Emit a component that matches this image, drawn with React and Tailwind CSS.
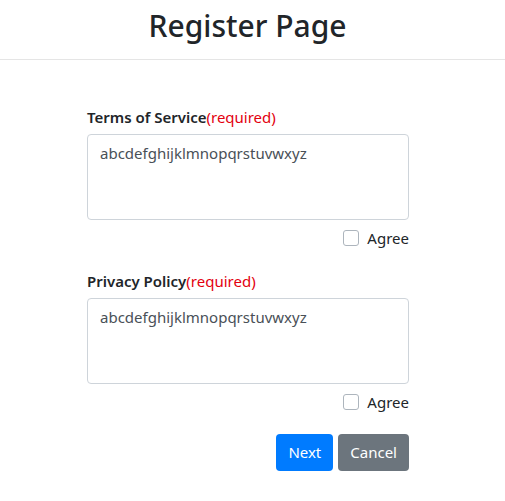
import { useState } from "react";

function Section({ title, value, checked, onToggle }) {
  return (
    <div>
      <label className="block h-[24px] mb-[5px] text-[15px] leading-[24px] font-semibold text-[#212529]">
        {title}
        <span className="text-[#e3000f] font-normal">(required)</span>
      </label>
      <textarea
        readOnly
        value={value}
        className="block w-full h-[86px] resize-none rounded-[4px] border border-[#ced4da] px-[12px] py-[6px] text-[15px] leading-[24px] text-[#495057] outline-none"
      />
      <div className="flex justify-end items-center mt-[6px] h-[24px]">
        <label className="flex items-center gap-[8px] text-[15px] leading-[24px] text-[#212529]">
          <input
            type="checkbox"
            checked={checked}
            onChange={onToggle}
            className="w-[16px] h-[16px] appearance-none rounded-[3px] border border-[#adb5bd] bg-white checked:bg-[#007bff]"
          />
          Agree
        </label>
      </div>
    </div>
  );
}

export default function App() {
  const [terms, setTerms] = useState(false);
  const [privacy, setPrivacy] = useState(false);
  const alphabet = "abcdefghijklmnopqrstuvwxyz";

  return (
    <div className="min-h-screen bg-white" style={{ fontFamily: '"Noto Sans", "Open Sans", sans-serif' }}>
      {/* header */}
      <div className="h-[60px] border-b border-[#e5e5e5] flex items-start justify-center pt-[6px] pr-[10px]">
        <h1 className="text-[30px] leading-[40px] font-medium text-[#212529]">Register Page</h1>
      </div>

      <div className="w-[322px] ml-[87px] pt-[45px]">
        <Section title="Terms of Service" value={alphabet} checked={terms} onToggle={() => setTerms(!terms)} />
        <div className="mt-[19px]">
          <Section title="Privacy Policy" value={alphabet} checked={privacy} onToggle={() => setPrivacy(!privacy)} />
        </div>

        <div className="flex justify-end gap-[5px] mt-[20px]">
          <button className="h-[37px] px-[12px] rounded-[4px] bg-[#007bff] text-white text-[15px]">Next</button>
          <button className="h-[37px] px-[12px] rounded-[4px] bg-[#6c757d] text-white text-[15px]">Cancel</button>
        </div>
      </div>
    </div>
  );
}
